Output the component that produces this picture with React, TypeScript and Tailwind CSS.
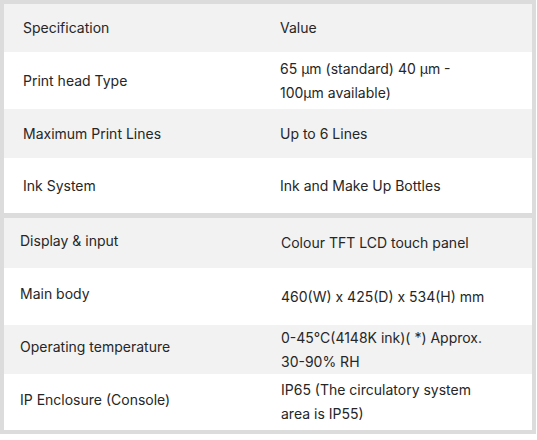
type Row = { label: string; value: string; h: string; shaded?: boolean }

const first: Row[] = [
  { label: 'Specification', value: 'Value', h: 'h-[48px]', shaded: true },
  { label: 'Print head Type', value: '65 µm (standard) 40 µm - 100µm available)', h: 'h-[57px]' },
  { label: 'Maximum Print Lines', value: 'Up to 6 Lines', h: 'h-[49px]', shaded: true },
  { label: 'Ink System', value: 'Ink and Make Up Bottles', h: 'h-[55px]' },
]

const second: Row[] = [
  { label: 'Display & input', value: 'Colour TFT LCD touch panel', h: 'h-[50px]', shaded: true },
  { label: 'Main body', value: '460(W) x 425(D) x 534(H) mm', h: 'h-[57px]' },
  { label: 'Operating temperature', value: '0-45°C(4148K ink)( *) Approx. 30-90% RH', h: 'h-[49px]', shaded: true },
  { label: 'IP Enclosure (Console)', value: 'IP65 (The circulatory system area is IP55)', h: 'h-[56px]' },
]

function SpecTable({ rows, second }: { rows: Row[]; second?: boolean }) {
  return (
    <div className="flex flex-col">
      {rows.map((row) => (
        <div
          key={row.label}
          className={`grid ${second ? 'grid-cols-[277px_1fr]' : 'grid-cols-[276px_1fr]'} ${row.h} ${
            row.shaded ? 'bg-[#f2f2f2]' : 'bg-white'
          }`}
        >
          <div className={`flex items-center ${second ? 'pl-[16px] pb-[5px]' : 'pl-[19px]'}`}>{row.label}</div>
          <div className="flex items-center">
            <span className="w-[212px]">{row.value}</span>
          </div>
        </div>
      ))}
    </div>
  )
}

export default function App() {
  return (
    <div className="bg-white w-[537px] h-[440px]">
      <div
        className="w-[536px] border-[4px] border-[#dcdcdc] bg-[#dcdcdc] flex flex-col gap-[5px] text-[14px] leading-[24px] text-[#262626]"
        style={{ fontFamily: 'Inter, "Liberation Sans", sans-serif' }}
      >
        <SpecTable rows={first} />
        <SpecTable rows={second} second />
      </div>
    </div>
  )
}
